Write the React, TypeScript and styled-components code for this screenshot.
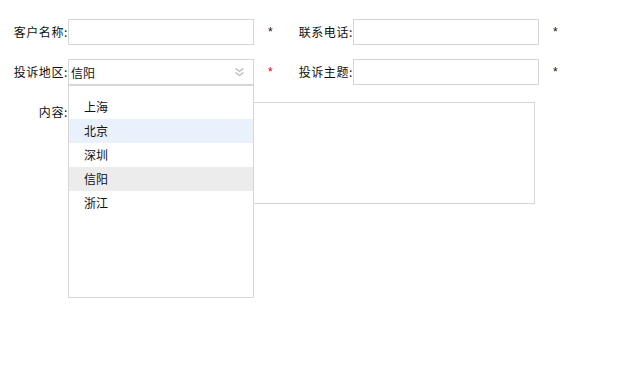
import styled, { createGlobalStyle } from "styled-components";

const Global = createGlobalStyle`
  html, body {
    margin: 0;
    padding: 0;
    background: #fff;
    min-height: 376px;
    font-family: "Noto Sans CJK SC", "Liberation Sans", sans-serif;
    font-size: 12px;
    color: #111;
  }
  #root {
    min-height: 376px;
  }
`;

const Form = styled.div`
  padding: 19px 0 0 8px;
  min-height: 376px;
  box-sizing: border-box;
  display: flex;
  flex-direction: column;
`;

const Row = styled.div<{ $top?: number }>`
  display: flex;
  align-items: center;
  height: 26px;
  margin-top: ${(p) => p.$top ?? 0}px;
`;

const TopRow = styled.div<{ $top?: number }>`
  display: flex;
  align-items: flex-start;
  margin-top: ${(p) => p.$top ?? 0}px;
`;

const Label = styled.label<{ $w: number; $lh?: number }>`
  width: ${(p) => p.$w}px;
  text-align: right;
  line-height: ${(p) => p.$lh ?? 26}px;
  letter-spacing: 0.6px;
  white-space: nowrap;
`;

const Input = styled.div`
  box-sizing: border-box;
  width: 186px;
  height: 26px;
  border: 1px solid #d6d6d6;
  background: #fff;
`;

const Star = styled.span<{ $red?: boolean; $w: number }>`
  width: ${(p) => p.$w}px;
  padding-left: 14px;
  box-sizing: border-box;
  color: ${(p) => (p.$red ? "#d40000" : "#111")};
  font-family: "Liberation Sans", sans-serif;
  font-size: 12px;
  line-height: 26px;
`;

const SelectWrap = styled.div`
  position: relative;
  width: 186px;
  height: 26px;
`;

const SelectBox = styled.div`
  box-sizing: border-box;
  width: 186px;
  height: 26px;
  border: 1px solid #d6d6d6;
  display: flex;
  align-items: center;
  justify-content: space-between;
  padding: 0 8px 0 2px;
`;

const Menu = styled.ul`
  position: absolute;
  z-index: 2;
  left: 0;
  top: 26px;
  box-sizing: border-box;
  width: 186px;
  height: 213px;
  margin: 0;
  padding: 9px 0 0;
  list-style: none;
  background: #fff;
  border: 1px solid #d6d6d6;
`;

const Item = styled.li<{ $tone?: "hover" | "active" }>`
  height: 24px;
  line-height: 24px;
  padding-left: 15px;
  background: ${(p) =>
    p.$tone === "hover" ? "#e9f1fc" : p.$tone === "active" ? "#ececec" : "transparent"};
`;

const TextArea = styled.div`
  box-sizing: border-box;
  width: 467px;
  height: 102px;
  border: 1px solid #d6d6d6;
`;

function Chevrons() {
  return (
    <svg width="11" height="10" viewBox="0 0 11 10" fill="none" stroke="#b8b8b8" strokeWidth="1.3">
      <path d="M1.5 1.5 L5.5 4.5 L9.5 1.5" />
      <path d="M1.5 5.5 L5.5 8.5 L9.5 5.5" />
    </svg>
  );
}

const cities = ["上海", "北京", "深圳", "信阳", "浙江"];

export default function App() {
  return (
    <>
      <Global />
      <Form>
        <Row>
          <Label $w={60}>客户名称:</Label>
          <Input />
          <Star $w={35}>*</Star>
          <Label $w={64}>联系电话:</Label>
          <Input />
          <Star $w={32}>*</Star>
        </Row>
        <Row $top={14}>
          <Label $w={60}>投诉地区:</Label>
          <SelectWrap>
            <SelectBox>
              <span>信阳</span>
              <Chevrons />
            </SelectBox>
            <Menu>
              {cities.map((c) => (
                <Item
                  key={c}
                  $tone={c === "北京" ? "hover" : c === "信阳" ? "active" : undefined}
                >
                  {c}
                </Item>
              ))}
            </Menu>
          </SelectWrap>
          <Star $w={35} $red>
            *
          </Star>
          <Label $w={64}>投诉主题:</Label>
          <Input />
          <Star $w={32}>*</Star>
        </Row>
        <TopRow $top={17}>
          <Label $w={60} $lh={20}>
            内容:
          </Label>
          <TextArea />
        </TopRow>
      </Form>
    </>
  );
}
